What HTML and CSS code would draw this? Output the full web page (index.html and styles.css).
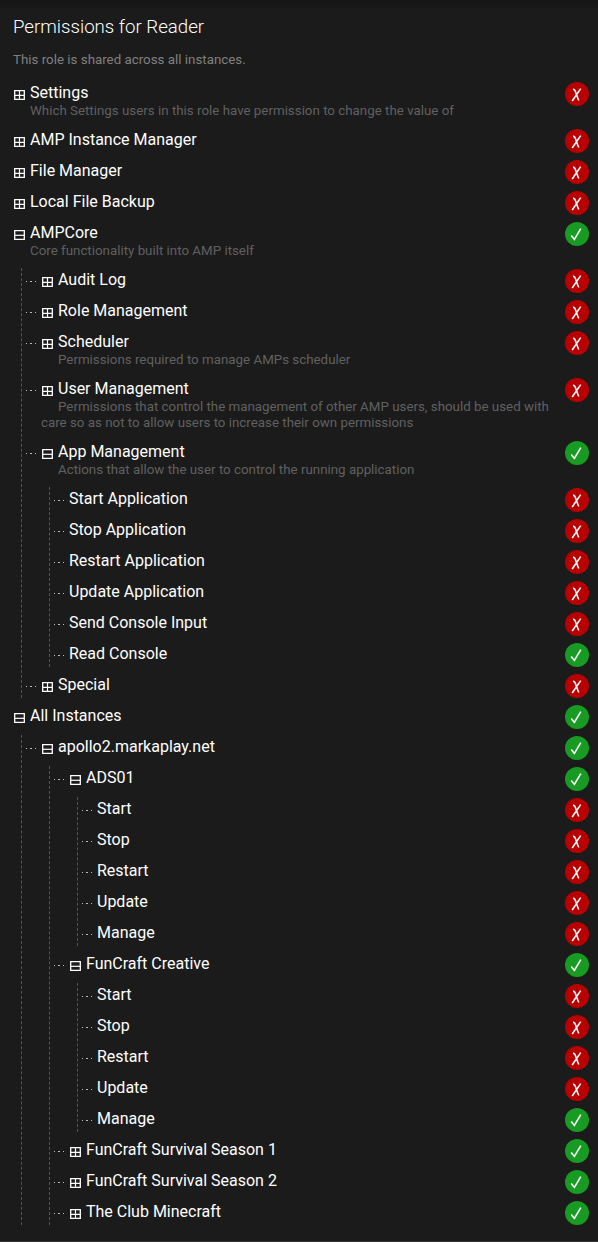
FILE: index.html
```html
<!DOCTYPE html>
<html lang="en">
<head>
<meta charset="utf-8">
<title>Permissions for Reader</title>
<link rel="stylesheet" href="styles.css">
</head>
<body>
<main class="panel">
<h1 class="title">Permissions for Reader</h1>
<p class="intro">This role is shared across all instances.</p>
<ul class="tree" id="tree"></ul>
</main>
<script src="tree.js"></script>
</body>
</html>
```
FILE: styles.css
```css
* { box-sizing: border-box; }
html { background: #1b1b1b; }
body {
  margin: 0;
  background: #1b1b1b;
  color: #fff;
  font-family: Roboto, sans-serif;
}
.panel {
  height: 1242px;
  padding: 14px 9px 0 13px;
  background: linear-gradient(#151515, #1b1b1b 10px);
  border-bottom: 1px solid #303030;
}
.title {
  margin: 0;
  font-size: 14pt;
  line-height: 26px;
  font-weight: 300;
}
.intro {
  margin: 12px 0 13px;
  font-size: 10pt;
  line-height: 16px;
  color: #808080;
}
.tree, .branch {
  display: flex;
  flex-direction: column;
  gap: 6px;
  margin: 0;
  padding: 0;
  list-style: none;
}
.branch {
  margin: 6px 0 0 8px;
  padding-left: 3px;
  border-left: 1px dashed #555;
}
.branch .branch { margin-left: 24px; }
.row {
  display: flex;
  min-height: 25px;
}
.connector {
  flex: none;
  width: 11px;
  height: 1px;
  margin: 13px 4px 0 1px;
}
.connector, .toggle, .badge svg { display: block; }
.toggle {
  flex: none;
  width: 11px;
  height: 10px;
  margin: 9px 5px 0 1px;
}
.label { flex: 1; min-width: 0; padding: 1px 0 3px; }
.name { font-size: 16px; line-height: 21px; }
.note {
  margin-left: -17px;
  padding-right: 10px;
  text-indent: 17px;
  font-size: 10pt;
  line-height: 16px;
  color: #606060;
}
.badge {
  flex: none;
  width: 24px;
  height: 24px;
  margin-top: 1px;
  border-radius: 50%;
  background: #b90000;
}
.badge.on { background: #179b22; }
```
FILE: tree.js
```js
const leaf = (name, on = 0) => ({ name, on });
const node = (name, on = 0, note = '', children = null) => ({ name, on, note, children, toggle: true });
const actions = manage => [leaf('Start'), leaf('Stop'), leaf('Restart'), leaf('Update'), leaf('Manage', manage)];

const data = [
  node('Settings', 0, 'Which Settings users in this role have permission to change the value of'),
  node('AMP Instance Manager'),
  node('File Manager'),
  node('Local File Backup'),
  node('AMPCore', 1, 'Core functionality built into AMP itself', [
    node('Audit Log'),
    node('Role Management'),
    node('Scheduler', 0, 'Permissions required to manage AMPs scheduler'),
    node('User Management', 0, 'Permissions that control the management of other AMP users, should be used with care so as not to allow users to increase their own permissions'),
    node('App Management', 1, 'Actions that allow the user to control the running application', [
      leaf('Start Application'), leaf('Stop Application'), leaf('Restart Application'),
      leaf('Update Application'), leaf('Send Console Input'), leaf('Read Console', 1)
    ]),
    node('Special')
  ]),
  node('All Instances', 1, '', [
    node('apollo2.markaplay.net', 1, '', [
      node('ADS01', 1, '', actions(0)),
      node('FunCraft Creative', 1, '', actions(1)),
      node('FunCraft Survival Season 1', 1),
      node('FunCraft Survival Season 2', 1),
      node('The Club Minecraft', 1)
    ])
  ])
];

const connector = '<svg class="connector" viewBox="0 0 11 1" fill="#bbb"><path d="M0 0h1v1H0zM4 0h2v1H4zM9 0h1v1H9z"/></svg>';
const box = open => `<svg class="toggle" viewBox="0 0 11 10" fill="none" stroke="#fff"><path d="M.7 .7h9.6v8.7H.7z" stroke-width="1.3"/><path d="M1 5.3h9${open ? '' : 'M5.5 1v8'}" stroke-width="1.2"/></svg>`;
const badge = on => `<span class="badge${on ? ' on' : ''}"><svg width="24" height="24" viewBox="0 0 24 24" fill="none" stroke="#fff" stroke-width="1.6">${
  on ? '<path d="M6.2 13.4l3.2 4L15.8 6.6"/>' : '<path d="M8 7.4q1.5-.3 2 1.2l3 8.2q.4 1.2 1.2 1.1M15.7 6.6L7.2 19"/>'}</svg></span>`;

const render = (item, depth) => `<li class="${item.toggle ? 'node' : 'leaf'}"><div class="row">${depth ? connector : ''}${
  item.toggle ? box(item.children) : ''}<div class="label"><div class="name">${item.name}</div>${
  item.note ? `<div class="note">${item.note}</div>` : ''}</div>${badge(item.on)}</div>${
  item.children ? `<ul class="branch">${item.children.map(c => render(c, depth + 1)).join('')}</ul>` : ''}</li>`;

document.getElementById('tree').innerHTML = data.map(item => render(item, 0)).join('');
```
